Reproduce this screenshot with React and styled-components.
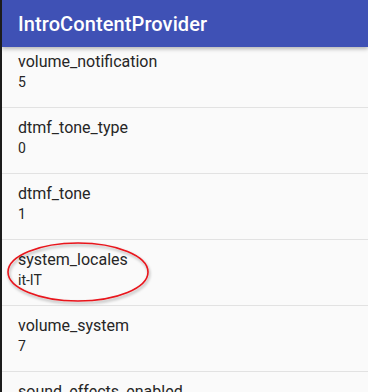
import React from "react";
import styled, { createGlobalStyle } from "styled-components";

const GlobalStyle = createGlobalStyle`
	html, body {
		margin: 0;
		padding: 0;
		background: #1c1c1c;
	}
	body {
		font-family: Roboto, "Noto Sans", sans-serif;
	}
`;

const settings = [
	{ name: "volume_notification", value: "5" },
	{ name: "dtmf_tone_type", value: "0" },
	{ name: "dtmf_tone", value: "1" },
	{ name: "system_locales", value: "it-IT", marked: true },
	{ name: "volume_system", value: "7" },
	{ name: "sound_effects_enabled", value: "1" },
];

const App = () => {
	return (
		<>
			<GlobalStyle />
			<Screen>
				<AppBar>
					<Title>IntroContentProvider</Title>
				</AppBar>
				<List>
					{settings.map((item) => (
						<Row key={item.name}>
							<Name>{item.name}</Name>
							<Value>{item.value}</Value>
							{item.marked && (
								<Mark viewBox="0 0 150 66" aria-hidden="true">
									<defs>
										<filter id="shade" x="-10%" y="-20%" width="120%" height="140%">
											<feDropShadow dx="1" dy="2" stdDeviation="1.5" floodColor="#000" floodOpacity="0.35" />
										</filter>
									</defs>
									<ellipse
										cx="74"
										cy="31"
										rx="70"
										ry="29"
										fill="none"
										stroke="#e8141b"
										strokeWidth="1.6"
										filter="url(#shade)"
									/>
								</Mark>
							)}
						</Row>
					))}
				</List>
			</Screen>
		</>
	);
};

const Screen = styled.div`
	width: 366px;
	height: 392px;
	margin-left: 2px;
	overflow: hidden;
	background-color: #fafafa;
	display: flex;
	flex-direction: column;
`;

const AppBar = styled.header`
	position: relative;
	z-index: 2;
	flex: 0 0 47px;
	display: flex;
	align-items: center;
	padding: 0 16px;
	background-color: #3f51b5;
	box-shadow: 0 2px 4px rgba(0, 0, 0, 0.28);
`;

const Title = styled.h1`
	margin: 0;
	color: #fff;
	font-size: 20px;
	font-weight: 500;
	letter-spacing: 0.1px;
`;

const List = styled.div`
	margin-top: -5px;
	display: flex;
	flex-direction: column;
`;

const Row = styled.div`
	position: relative;
	height: 66px;
	padding: 10px 16px 0;
	box-sizing: border-box;
	border-bottom: 1px solid #e2e2e2;
	color: #262626;
	flex-shrink: 0;
`;

const Name = styled.div`
	font-size: 16px;
	line-height: 20px;
`;

const Value = styled.div`
	font-size: 14px;
	line-height: 20px;
`;

const Mark = styled.svg`
	position: absolute;
	left: 2px;
	top: 1px;
	width: 150px;
	height: 66px;
	pointer-events: none;
`;

export default App;
